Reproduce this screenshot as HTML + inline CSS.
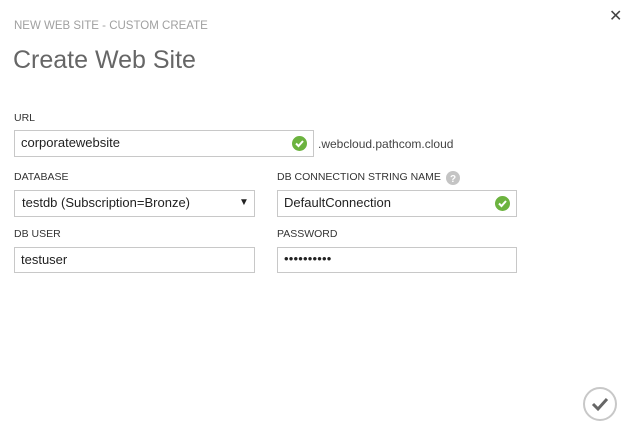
<!DOCTYPE html><html><head><style>
body{margin:0;width:629px;height:438px;background:#fff;position:relative;font-family:"Liberation Sans",sans-serif;overflow:hidden}
.a{position:absolute}
.lbl{font-size:10.5px;color:#333;}
.box{position:absolute;border:1px solid #c8c8c8;box-sizing:border-box;font-size:13px;color:#222;padding-left:6px;line-height:24px}
</style></head><body>
<div class="a" style="left:14px;top:20px;font-size:11.5px;color:#a0a0a0">NEW WEB SITE - CUSTOM CREATE</div>
<div class="a" style="left:13px;top:46px;font-size:25px;color:#666;letter-spacing:0px">Create Web Site</div>
<div class="a" style="left:609px;top:6px;font-size:16px;color:#444">✕</div>
<div class="a lbl" style="left:14px;top:112px">URL</div>
<div class="box" style="left:14px;top:130px;width:300px;height:27px">corporatewebsite</div>
<svg class="a" style="left:292px;top:136px" width="15" height="15"><circle cx="7.5" cy="7.5" r="7.5" fill="#6cb33f"/><path d="M4 7.5l2.5 2.5 4.5-5" stroke="#fff" stroke-width="2" fill="none"/></svg>
<div class="a" style="left:318px;top:137px;font-size:12px;color:#444">.webcloud.pathcom.cloud</div>
<div class="a lbl" style="left:14px;top:171px">DATABASE</div>
<div class="box" style="left:14px;top:190px;width:241px;height:27px;padding-left:7px">testdb (Subscription=Bronze)</div>
<div class="a" style="left:239px;top:197px;font-size:10px;color:#222">▼</div>
<div class="a lbl" style="left:277px;top:171px">DB CONNECTION STRING NAME</div>
<svg class="a" style="left:446px;top:171px" width="14" height="14"><circle cx="7" cy="7" r="7" fill="#c4c4c4"/><text x="7" y="11" font-size="10" font-weight="bold" fill="#fff" text-anchor="middle" font-family="Liberation Sans">?</text></svg>
<div class="box" style="left:277px;top:190px;width:240px;height:27px">DefaultConnection</div>
<svg class="a" style="left:495px;top:196px" width="15" height="15"><circle cx="7.5" cy="7.5" r="7.5" fill="#6cb33f"/><path d="M4 7.5l2.5 2.5 4.5-5" stroke="#fff" stroke-width="2" fill="none"/></svg>
<div class="a lbl" style="left:14px;top:228px">DB USER</div>
<div class="box" style="left:14px;top:247px;width:241px;height:26px;line-height:24px">testuser</div>
<div class="a lbl" style="left:277px;top:228px">PASSWORD</div>
<div class="box" style="left:277px;top:247px;width:240px;height:26px;line-height:22px;font-size:13px;letter-spacing:0.2px">••••••••••</div>
<svg class="a" style="left:582px;top:386px" width="36" height="36"><circle cx="18" cy="18" r="16" stroke="#c8c8c8" stroke-width="2" fill="none"/><path d="M11 18l5 5 9-10" stroke="#666" stroke-width="3" fill="none"/></svg>
</body></html>
